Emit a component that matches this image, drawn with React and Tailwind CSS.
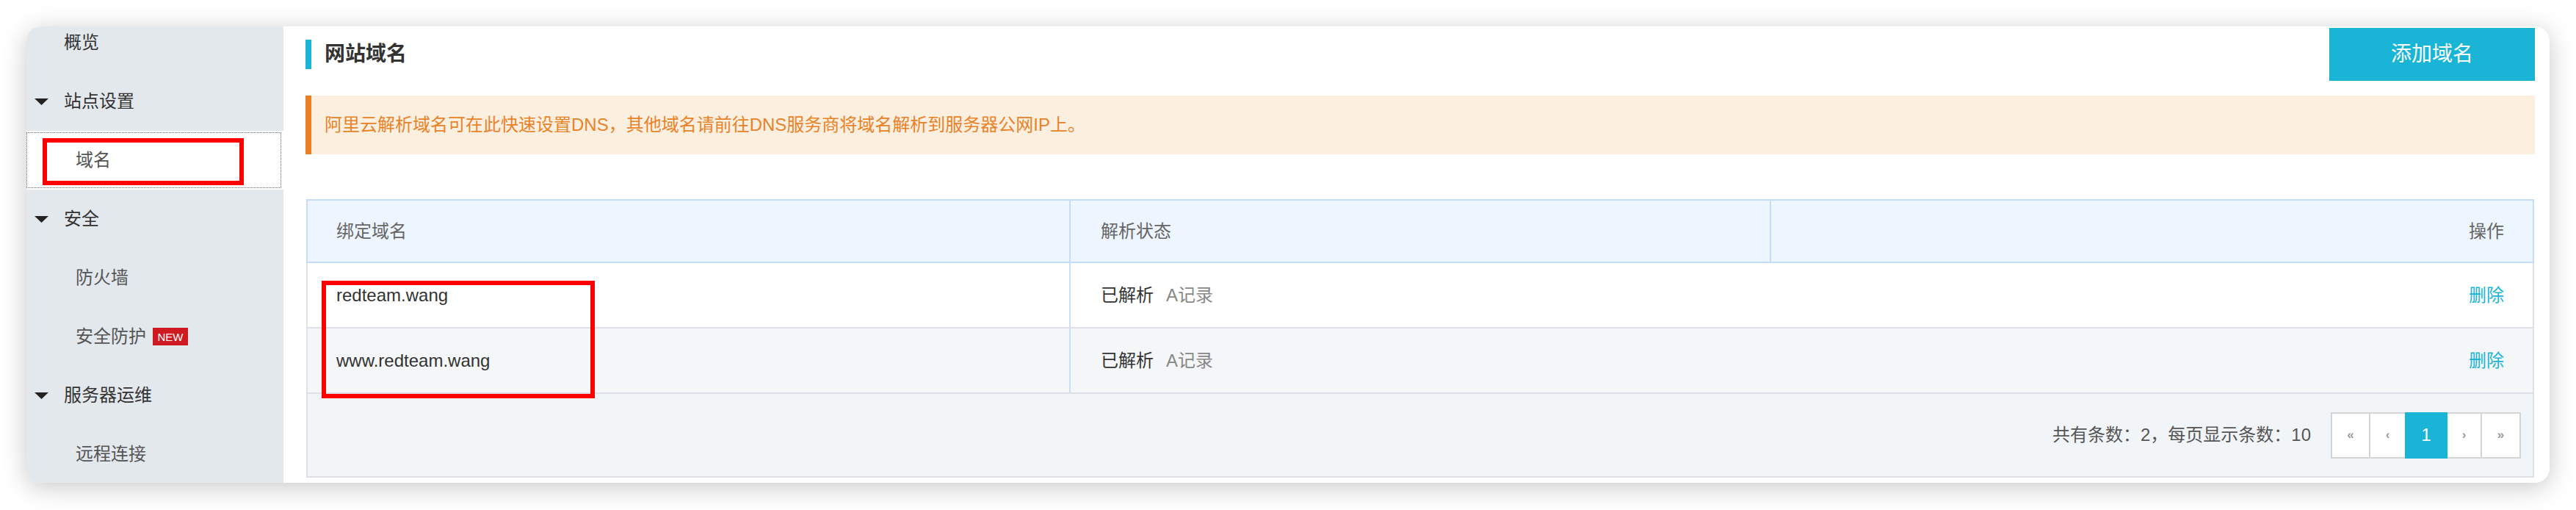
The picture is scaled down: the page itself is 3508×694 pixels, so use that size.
import React from "react";

const menu = [
  { label: "概览", top: true, arrow: false },
  { label: "站点设置", top: true, arrow: true },
  { label: "域名", active: true },
  { label: "安全", top: true, arrow: true },
  { label: "防火墙" },
  { label: "安全防护", badge: "NEW" },
  { label: "服务器运维", top: true, arrow: true },
  { label: "远程连接" },
];

const domains = [
  { name: "redteam.wang", bg: "bg-white" },
  { name: "www.redteam.wang", bg: "bg-[#f5f6f8]" },
];

const Caret = () => (
  <svg width="19" height="9" viewBox="0 0 19 9" className="block">
    <polygon points="0,0 19,0 9.5,9" fill="#222" />
  </svg>
);

const SideItem = ({ item }) => {
  if (item.top) {
    return (
      <div className="h-[80px] flex items-center text-[#333]">
        <div className="w-[51px] pl-[11px]">{item.arrow && <Caret />}</div>
        <span className="leading-none">{item.label}</span>
      </div>
    );
  }
  return (
    <div
      className={`relative h-[80px] flex items-center pl-[67px] text-[#555] ${
        item.active ? "bg-white" : ""
      }`}
    >
      {item.active && (
        <>
          <div className="absolute top-[2px] bottom-[2px] left-0 right-[3px] border border-dotted border-[#666]" />
          <div className="absolute left-[22px] top-[10px] w-[274px] h-[64px] border-[6px] border-[#ff0000]" />
        </>
      )}
      <span className="relative leading-none">{item.label}</span>
      {item.badge && (
        <span className="ml-[9px] h-[24px] w-[48px] flex items-center justify-center bg-[#cf1a21] text-white text-[15px] leading-none">
          {item.badge}
        </span>
      )}
    </div>
  );
};

const App = () => {
  return (
    <div className="w-[3508px] h-[694px] bg-white p-[36px] font-['Liberation_Sans','Noto_Sans_CJK_SC',sans-serif] text-[24px]">
      <div className="flex h-[621px] rounded-[20px] overflow-hidden bg-white shadow-[0_6px_34px_rgba(0,0,0,0.22)]">
        {/* sidebar */}
        <div className="w-[350px] bg-[#e3e8ed] overflow-hidden">
          <div className="-mt-[18px]">
            {menu.map((item, idx) => (
              <SideItem key={idx} item={item} />
            ))}
          </div>
        </div>

        {/* main */}
        <div className="flex-1 pl-[30px] pr-[20px]">
          <div className="mt-[2px] h-[72px] flex items-center justify-between">
            <div className="flex items-center">
              <div className="w-[8px] h-[40px] bg-[#19b4d6]" />
              <h2 className="ml-[18px] text-[28px] font-semibold text-[#333] leading-none">网站域名</h2>
            </div>
            <button className="w-[280px] h-[72px] bg-[#19b4d6] text-white text-[28px] leading-none">
              添加域名
            </button>
          </div>

          <div className="mt-[20px] h-[80px] flex items-center bg-[#fbefe0] border-l-[8px] border-[#e97f22] pl-[18px] text-[#ea8228] leading-none">
            阿里云解析域名可在此快速设置DNS，其他域名请前往DNS服务商将域名解析到服务器公网IP上。
          </div>

          <div className="relative mt-[61px] mx-[1px]">
            <div className="flex h-[87px] border-2 border-[#c5ddf9] bg-[#edf5ff] text-[#666]">
              <div className="w-[1039px] border-r-2 border-[#c5ddf9] flex items-center pl-[39px] leading-none">绑定域名</div>
              <div className="w-[954px] border-r-2 border-[#c5ddf9] flex items-center pl-[41px] leading-none">解析状态</div>
              <div className="flex-1 flex items-center justify-end pr-[39px] leading-none">操作</div>
            </div>

            {domains.map((d) => (
              <div key={d.name} className={`flex h-[89px] border-x-2 border-b-2 border-[#dde1e7] ${d.bg}`}>
                <div className="w-[1039px] border-r-2 border-[#c8e0fb] flex items-center pl-[39px] text-[#333] leading-none">
                  {d.name}
                </div>
                <div className="flex-1 flex items-center pl-[41px] leading-none">
                  <span className="text-[#333]">已解析</span>
                  <span className="ml-[17px] text-[#888]">A记录</span>
                </div>
                <div className="flex items-center pr-[39px] text-[#19b4d6] leading-none">删除</div>
              </div>
            ))}

            <div className="h-[114px] flex items-center justify-end pr-[16px] bg-[#f2f5f8] border-x-2 border-b-2 border-[#dde1e7]">
              <span className="text-[#555] leading-none">共有条数：2，每页显示条数：10</span>
              <div className="ml-[27px] flex h-[63px] text-[#999] text-[17px] font-bold">
                <div className="w-[54px] border-2 border-[#d4d4d4] bg-white flex items-center justify-center">«</div>
                <div className="w-[47px] border-y-2 border-[#d4d4d4] bg-white flex items-center justify-center">‹</div>
                <div className="w-[58px] bg-[#19b4d6] text-white text-[24px] font-normal flex items-center justify-center">1</div>
                <div className="w-[47px] border-y-2 border-r-2 border-[#d4d4d4] bg-white flex items-center justify-center">›</div>
                <div className="w-[53px] border-y-2 border-r-2 border-[#d4d4d4] bg-white flex items-center justify-center">»</div>
              </div>
            </div>

            <div className="absolute left-[21px] top-[111px] w-[372px] h-[160px] border-[6px] border-[#ff0000]" />
          </div>
        </div>
      </div>
    </div>
  );
};

export default App;
